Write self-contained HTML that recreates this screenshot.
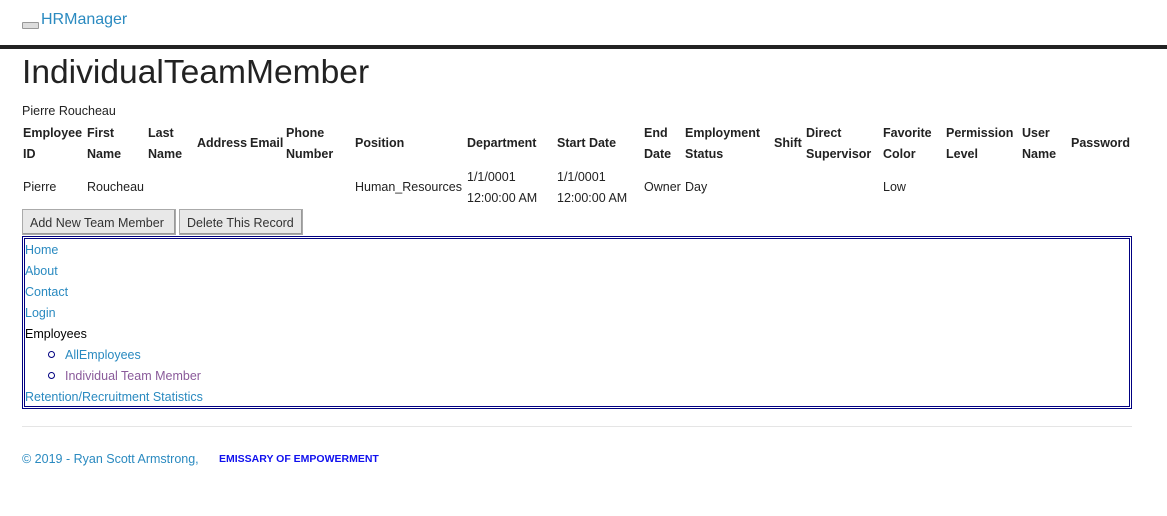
<!DOCTYPE html>
<html><head><meta charset="utf-8"><style>
body{margin:0;width:1167px;height:516px;background:#fff;font-family:"Liberation Sans",sans-serif;font-size:12.5px;color:#222;position:relative;overflow:hidden}
.a{position:absolute;white-space:nowrap;line-height:21px;margin-top:1px}
.b{font-weight:bold}
.l{color:#2a8ac0}
.btn{position:absolute;top:209px;height:26px;border:1px solid #aaa;background:#e8e8e8;box-shadow:inset -1px -1px 0 #999;font-size:12.5px;line-height:26px;padding:0 7px;box-sizing:border-box;color:#333}
</style></head><body>
<div style="position:absolute;left:22px;top:22px;width:15px;height:5px;border:1px solid #999;background:#ddd;border-radius:1px"></div>
<div class="a l" style="left:41px;top:8px;font-size:16px">HRManager</div>
<div style="position:absolute;left:0;top:45px;width:1167px;height:4px;background:#222"></div>
<div class="a" style="left:22px;top:52px;font-size:33.6px;line-height:40px;color:#222">IndividualTeamMember</div>
<div class="a" style="left:22px;top:100px">Pierre Roucheau</div>

<div class="a b" style="left:23px;top:122px">Employee<br>ID</div>
<div class="a b" style="left:87px;top:122px">First<br>Name</div>
<div class="a b" style="left:148px;top:122px">Last<br>Name</div>
<div class="a b" style="left:197px;top:132px">Address</div>
<div class="a b" style="left:250px;top:132px">Email</div>
<div class="a b" style="left:286px;top:122px">Phone<br>Number</div>
<div class="a b" style="left:355px;top:132px">Position</div>
<div class="a b" style="left:467px;top:132px">Department</div>
<div class="a b" style="left:557px;top:132px">Start Date</div>
<div class="a b" style="left:644px;top:122px">End<br>Date</div>
<div class="a b" style="left:685px;top:122px">Employment<br>Status</div>
<div class="a b" style="left:774px;top:132px">Shift</div>
<div class="a b" style="left:806px;top:122px">Direct<br>Supervisor</div>
<div class="a b" style="left:883px;top:122px">Favorite<br>Color</div>
<div class="a b" style="left:946px;top:122px">Permission<br>Level</div>
<div class="a b" style="left:1022px;top:122px">User<br>Name</div>
<div class="a b" style="left:1071px;top:132px">Password</div>

<div class="a" style="left:23px;top:176px">Pierre</div>
<div class="a" style="left:87px;top:176px">Roucheau</div>
<div class="a" style="left:355px;top:176px">Human_Resources</div>
<div class="a" style="left:467px;top:166px">1/1/0001<br>12:00:00 AM</div>
<div class="a" style="left:557px;top:166px">1/1/0001<br>12:00:00 AM</div>
<div class="a" style="left:644px;top:176px">Owner</div>
<div class="a" style="left:685px;top:176px">Day</div>
<div class="a" style="left:883px;top:176px">Low</div>

<div class="btn" style="left:22px;width:154px">Add New Team Member</div>
<div class="btn" style="left:179px;width:124px">Delete This Record</div>

<div style="position:absolute;left:22px;top:236px;width:1110px;height:173px;border:3px double #000080;box-sizing:border-box"></div>
<div class="a l" style="left:25px;top:239px">Home</div>
<div class="a l" style="left:25px;top:260px">About</div>
<div class="a l" style="left:25px;top:281px">Contact</div>
<div class="a l" style="left:25px;top:302px">Login</div>
<div class="a" style="left:25px;top:323px;color:#000">Employees</div>
<div style="position:absolute;left:48px;top:351px;width:5px;height:5px;border:1px solid #000080;border-radius:50%"></div>
<div class="a l" style="left:65px;top:344px">AllEmployees</div>
<div style="position:absolute;left:48px;top:372px;width:5px;height:5px;border:1px solid #000080;border-radius:50%"></div>
<div class="a" style="left:65px;top:365px;color:#8a5a9a">Individual Team Member</div>
<div class="a l" style="left:25px;top:386px">Retention/Recruitment Statistics</div>

<div style="position:absolute;left:22px;top:426px;width:1110px;height:1px;background:#e5e5e5"></div>
<div class="a l" style="left:22px;top:448px">© 2019 - Ryan Scott Armstrong,</div>
<div class="a b" style="left:219px;top:448px;color:#1010ee;font-size:10.5px">EMISSARY OF EMPOWERMENT</div>
</body></html>
